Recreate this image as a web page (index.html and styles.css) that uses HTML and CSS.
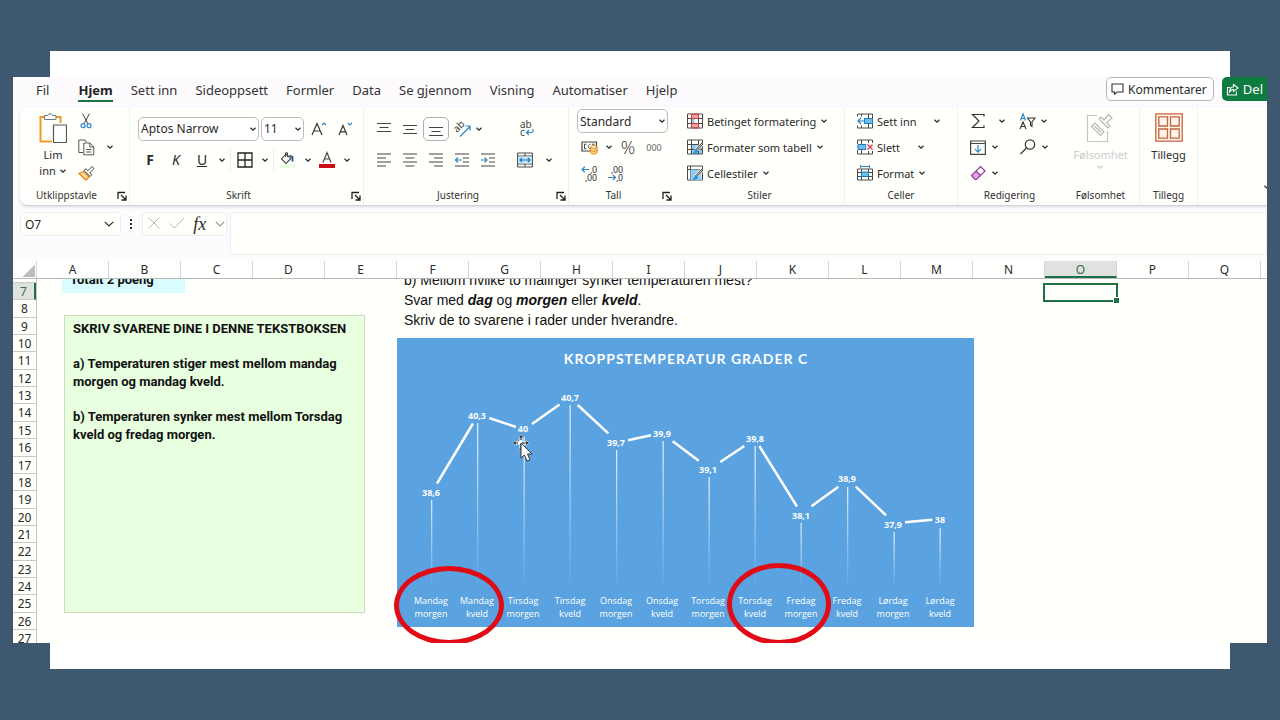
FILE: index.html
```html
<!DOCTYPE html>
<html lang="nb">

<head>
  <meta charset="UTF-8">
  <meta name="viewport" content="width=device-width, initial-scale=1.0">
  <title>Kroppstemperatur</title>
  <link rel="stylesheet" href="styles.css">
</head>

<body>
  <svg class="symbols" width="0" height="0" aria-hidden="true">
    <symbol id="chev" viewBox="0 0 8 8"><path d="M1.5 2.8L4 5.2 6.5 2.8" fill="none" stroke="currentColor" stroke-width="1.3"/></symbol>
    <symbol id="chev-big" viewBox="0 0 10 10"><path d="M.8 2.8L5 7 9.2 2.8" fill="none" stroke="currentColor" stroke-width="1.2"/></symbol>
    <symbol id="launcher" viewBox="0 0 10 10"><path d="M1 8V1.5H8M4 4l4.5 4.5M9 4.5V9H4.5" fill="none" stroke="#222" stroke-width="1.3"/></symbol>
    <symbol id="grid" viewBox="0 0 16 16"><path d="M.5 1h15v14H.5zM.5 5.5h15M.5 10.5h15M4.5 1v14M11.5 1v14" fill="none" stroke="#4a4a4a"/></symbol>
    <symbol id="brush" viewBox="0 0 16 16"><path d="M15.5 4.5L9 11.5" stroke="#fff" stroke-width="4"/><path d="M15.5 4.5L9 11.5" stroke="#444" stroke-width="2.4"/><path d="M15 5L9.5 11" stroke="#fff" stroke-width=".8"/><path d="M9.5 10.5c-2 0-2 3-4 4 2.500.8 5 0 5.500-2.500z" fill="#2b8fd0"/></symbol>
  </svg>

  <main class="slide">
    <div class="app">
      <header class="menu">
        <nav class="tabs">
          <a class="tab" href="#">Fil</a>
          <a class="tab active" href="#">Hjem</a>
          <a class="tab" href="#">Sett inn</a>
          <a class="tab" href="#">Sideoppsett</a>
          <a class="tab" href="#">Formler</a>
          <a class="tab" href="#">Data</a>
          <a class="tab" href="#">Se gjennom</a>
          <a class="tab" href="#">Visning</a>
          <a class="tab" href="#">Automatiser</a>
          <a class="tab" href="#">Hjelp</a>
        </nav>
        <button class="comments">
          <svg width="13" height="12" viewBox="0 0 13 12"><path d="M1 1h11v8H6L3.5 11.3V9H1z" fill="none" stroke="#333" stroke-width="1.1"/></svg>
          Kommentarer
        </button>
        <button class="share">
          <svg width="13" height="13" viewBox="0 0 13 13"><path d="M4 4.500H1.500V12h9V8.500M7.500 1.500L12 5 7.500 8.500V6.500C5 6.500 4 8 3.500 9.500 3.500 6 5 3.800 7.500 3.700z" fill="none" stroke="#fff" stroke-width="1.1"/></svg>
          Del
        </button>
      </header>

      <section class="ribbon">
        <div class="group clipboard">
          <div class="group-body">
            <button class="big-btn">
              <svg width="28" height="32" viewBox="0 0 28 32"><path d="M5 5H1.500v24.500H13M17 5h4.500v6" fill="none" stroke="#eb9b26" stroke-width="2"/><path d="M5.500 7.500v-4h3.200a2.600 2.600 0 0 1 5 0H17v4z" fill="#fff" stroke="#777"/><path d="M14.500 13h13v17.500h-13z" fill="#fff" stroke="#555" stroke-width="1.2"/></svg>
              <span>Lim</span>
              <span>inn <svg class="chev"><use href="#chev"/></svg></span>
            </button>
            <div class="rows">
              <div class="row"><button class="ic" aria-label="Klipp ut"><svg width="12" height="16" viewBox="0 0 12 16"><path d="M2.500.5L8 11M9.500.5L4 11" stroke="#444" fill="none"/><circle cx="3" cy="12.700" r="2" fill="none" stroke="#2b88c8" stroke-width="1.2"/><circle cx="9" cy="12.700" r="2" fill="none" stroke="#2b88c8" stroke-width="1.2"/></svg></button></div>
              <div class="row"><button class="ic" aria-label="Kopier"><svg width="17" height="17" viewBox="0 0 17 17"><path d="M5 13.500H.8V1H7l1.500 2" fill="none" stroke="#555"/><path d="M5.800 4h6l4 4v7.800h-10zM11.800 4v4h4M8 10.500h5.500M8 13h5.500" fill="none" stroke="#555"/></svg></button><button class="drop" aria-label="Kopier flere"><svg class="chev"><use href="#chev"/></svg></button></div>
              <div class="row"><button class="ic" aria-label="Kopier format"><svg width="17" height="16" viewBox="0 0 17 16"><path d="M1 8.500l5-2 5 5.500-3 3z" fill="#ffdc9a" stroke="#e08a10" stroke-width="1.3"/><path d="M6 5.500l6 6 1.800-1.800-2-2L16 3.500 14 1.500 9.800 5.700 7.800 3.800z" fill="#fff" stroke="#444"/></svg></button></div>
            </div>
          </div>
          <div class="group-foot"><span>Utklippstavle</span><button class="launch" aria-label="Utklippstavle"><svg><use href="#launcher"/></svg></button></div>
        </div>

        <div class="group font">
          <div class="group-body two">
            <div class="row">
              <div class="combo family"><select aria-label="Skrift"><option>Aptos Narrow</option></select><svg class="chev"><use href="#chev"/></svg></div>
              <div class="combo size"><select aria-label="Skriftstørrelse"><option>11</option></select><svg class="chev"><use href="#chev"/></svg></div>
              <button class="ic" aria-label="Øk skriftstørrelse"><svg width="16" height="16" viewBox="0 0 16 16"><path d="M1 14L6 2.500 11 14M2.800 10h6.400" fill="none" stroke="#333" stroke-width="1.2"/><path d="M11 4l2-2 2 2" fill="none" stroke="#2b88c8" stroke-width="1.2"/></svg></button>
              <button class="ic" aria-label="Reduser skriftstørrelse"><svg width="16" height="16" viewBox="0 0 16 16"><path d="M2 14L6 4.500 10 14M3.500 10.800h5" fill="none" stroke="#333" stroke-width="1.2"/><path d="M11 2l2 2 2-2" fill="none" stroke="#2b88c8" stroke-width="1.2"/></svg></button>
            </div>
            <div class="row">
              <button class="ic bold">F</button>
              <button class="ic italic">K</button>
              <button class="ic under">U</button>
              <button class="drop" aria-label="Understreking"><svg class="chev"><use href="#chev"/></svg></button>
              <i class="sep"></i>
              <button class="ic" aria-label="Kantlinjer"><svg width="16" height="16" viewBox="0 0 16 16"><path d="M1 1h14v14H1zM8 1v14M1 8h14" fill="none" stroke="#222" stroke-width="1.3"/></svg></button>
              <button class="drop" aria-label="Flere kantlinjer"><svg class="chev"><use href="#chev"/></svg></button>
              <i class="sep"></i>
              <button class="ic" aria-label="Fyllfarge"><svg width="16" height="16" viewBox="0 0 16 16"><path d="M6 2L1.500 7l4.500 4.500L11 6.500z" fill="#fff" stroke="#444" stroke-width="1.1"/><path d="M5.500 5V.8h2V5" fill="none" stroke="#444"/><path d="M9.500 3.500l3 1.500v4.500" fill="none" stroke="#24538a" stroke-width="1.8"/><path d="M0 13h15v3H0z" fill="#e8ffe0"/></svg></button>
              <button class="drop" aria-label="Flere fyllfarger"><svg class="chev"><use href="#chev"/></svg></button>
              <button class="ic" aria-label="Skriftfarge"><svg width="16" height="17" viewBox="0 0 16 17"><path d="M4 11.500L8 1.500l4 10M5.500 8h5" fill="none" stroke="#444" stroke-width="1.2"/><path d="M0 13h16v4H0z" fill="#d00c14"/></svg></button>
              <button class="drop" aria-label="Flere skriftfarger"><svg class="chev"><use href="#chev"/></svg></button>
            </div>
          </div>
          <div class="group-foot"><span>Skrift</span><button class="launch" aria-label="Skrift"><svg><use href="#launcher"/></svg></button></div>
        </div>

        <div class="group align">
          <div class="group-body two">
            <div class="row">
              <button class="ic" aria-label="Topp"><svg width="16" height="16" viewBox="0 0 16 16"><path d="M1 2.500h14M3.500 6.500h9M1 10.500h14" stroke="#444" stroke-width="1.2"/></svg></button>
              <button class="ic" aria-label="Midten"><svg width="16" height="16" viewBox="0 0 16 16"><path d="M1 4.500h14M3.500 8.500h9M1 12.500h14" stroke="#444" stroke-width="1.2"/></svg></button>
              <button class="ic pressed" aria-label="Bunn"><svg width="16" height="16" viewBox="0 0 16 16"><path d="M1 6.500h14M3.500 10.500h9M1 14.500h14" stroke="#444" stroke-width="1.2"/></svg></button>
              <button class="ic" aria-label="Retning"><svg width="18" height="18" viewBox="0 0 18 18"><text x="0" y="0" font-size="10" transform="translate(4 13) rotate(-45)" fill="#444">ab</text><path d="M7 16.500L17 6.500M12.500 6H17v4.500" fill="none" stroke="#2b88c8" stroke-width="1.2"/></svg></button>
              <button class="drop" aria-label="Flere retninger"><svg class="chev"><use href="#chev"/></svg></button>
              <button class="ic wrap" aria-label="Bryt tekst"><svg width="15" height="17" viewBox="0 0 15 17"><text x="1" y="8" font-size="10" fill="#444">ab</text><text x="1" y="16" font-size="10" fill="#444">c</text><path d="M14 9v2c0 1-.5 1.500-1.500 1.500H7.500M10 10l-2.500 2.500L10 15" fill="none" stroke="#2b88c8" stroke-width="1.2"/></svg></button>
            </div>
            <div class="row">
              <button class="ic" aria-label="Venstrejuster"><svg width="16" height="16" viewBox="0 0 16 16"><path d="M1 2h14M1 6h9M1 10h14M1 14h9" stroke="#444" stroke-width="1.2"/></svg></button>
              <button class="ic" aria-label="Midtstill"><svg width="16" height="16" viewBox="0 0 16 16"><path d="M1 2h14M3.500 6h9M1 10h14M3.500 14h9" stroke="#444" stroke-width="1.2"/></svg></button>
              <button class="ic" aria-label="Høyrejuster"><svg width="16" height="16" viewBox="0 0 16 16"><path d="M1 2h14M6 6h9M1 10h14M6 14h9" stroke="#444" stroke-width="1.2"/></svg></button>
              <button class="ic" aria-label="Reduser innrykk"><svg width="16" height="16" viewBox="0 0 16 16"><path d="M1 2h14M9 6h6M9 10h6M1 14h14" stroke="#444" stroke-width="1.2"/><path d="M7.500 8H1.500M4 5.500L1.500 8 4 10.500" fill="none" stroke="#2b88c8" stroke-width="1.2"/></svg></button>
              <button class="ic" aria-label="Øk innrykk"><svg width="16" height="16" viewBox="0 0 16 16"><path d="M1 2h14M9 6h6M9 10h6M1 14h14" stroke="#444" stroke-width="1.2"/><path d="M1 8h6M4.500 5.500L7 8l-2.500 2.500" fill="none" stroke="#2b88c8" stroke-width="1.2"/></svg></button>
              <button class="ic merge" aria-label="Slå sammen"><svg width="16" height="16" viewBox="0 0 16 16"><path d="M.6 1h14.800v14H.6zM.6 4h14.800M.6 12h14.800M8 1v3M8 12v3" fill="none" stroke="#444"/><path d="M1 4.500h14v7H1z" fill="#bfe5f8"/><path d="M3 8h10M5 6L3 8l2 2M11 6l2 2-2 2" fill="none" stroke="#1c78b8" stroke-width="1.1"/></svg></button>
              <button class="drop far" aria-label="Flere"><svg class="chev"><use href="#chev"/></svg></button>
            </div>
          </div>
          <div class="group-foot"><span>Justering</span><button class="launch" aria-label="Justering"><svg><use href="#launcher"/></svg></button></div>
        </div>

        <div class="group number">
          <div class="group-body three">
            <div class="row"><div class="combo format"><select aria-label="Tallformat"><option>Standard</option></select><svg class="chev"><use href="#chev"/></svg></div></div>
            <div class="row">
              <button class="ic" aria-label="Valuta"><svg width="17" height="15" viewBox="0 0 17 15"><path d="M1 2h14.500v9H1z" fill="none" stroke="#444" stroke-width="1.2"/><path d="M5.500 4.200H3.500v4.500h2M9.500 4.200c-3 0-3 4.500 0 4.500M11 4.200h2.500" fill="none" stroke="#444"/><path d="M9.500 7v5.500c0 2 6.500 2 6.500 0V7z" fill="#ffd68c" stroke="#e08a10"/><ellipse cx="12.800" cy="7" rx="3.200" ry="1.400" fill="#fff" stroke="#e08a10"/><path d="M9.500 9.800c0 1.800 6.500 1.800 6.500 0" fill="none" stroke="#e08a10"/></svg></button>
              <button class="drop" aria-label="Flere valutaer"><svg class="chev"><use href="#chev"/></svg></button>
              <button class="ic percent">%</button>
              <button class="ic thousand">000</button>
            </div>
            <div class="row">
              <button class="ic decimals" aria-label="Flere desimaler"><svg width="17" height="17" viewBox="0 0 17 17"><path d="M8 4.500H1M3.800 1.800L1 4.500l2.800 2.700" fill="none" stroke="#2b88c8" stroke-width="1.2"/><text x="16" y="8">,0</text><text x="16" y="16">,00</text></svg></button>
              <button class="ic decimals" aria-label="Færre desimaler"><svg width="17" height="17" viewBox="0 0 17 17"><path d="M1 12.500h7.500M5.800 9.800l2.700 2.700-2.700 2.700" fill="none" stroke="#2b88c8" stroke-width="1.2"/><text x="16" y="8">,00</text><text x="16" y="16">,0</text></svg></button>
            </div>
          </div>
          <div class="group-foot"><span>Tall</span><button class="launch" aria-label="Tall"><svg><use href="#launcher"/></svg></button></div>
        </div>

        <div class="group styles">
          <div class="group-body three">
            <div class="row"><button class="txt"><svg width="16" height="16" viewBox="0 0 16 16"><path d="M4.500 1h7v4.500h-7zM4.500 10.500h7V15h-7z" fill="#f4a09a"/><path d="M4.500 5.500h3v5h-3z" fill="#8fc9f0"/><use href="#grid"/><path d="M4.500 1h7v4.500h-7zM4.500 10.500h7V15h-7z" fill="none" stroke="#cf3f3a"/></svg>Betinget formatering<svg class="chev"><use href="#chev"/></svg></button></div>
            <div class="row"><button class="txt"><svg width="16" height="16" viewBox="0 0 16 16"><path d="M4.500 5.500h11V15h-11z" fill="#8fcdf2"/><use href="#grid"/><use href="#brush"/></svg>Formater som tabell<svg class="chev"><use href="#chev"/></svg></button></div>
            <div class="row"><button class="txt"><svg width="16" height="16" viewBox="0 0 16 16"><path d="M.5 1h15v14H.5zM.5 4.500h15M3.500 1v14" fill="none" stroke="#4a4a4a"/><path d="M3.500 4.500h11V15h-11z" fill="#8fcdf2"/><use href="#brush"/></svg>Cellestiler<svg class="chev"><use href="#chev"/></svg></button></div>
          </div>
          <div class="group-foot"><span>Stiler</span></div>
        </div>

        <div class="group cells">
          <div class="group-body three">
            <div class="row"><button class="txt"><svg width="16" height="16" viewBox="0 0 16 16"><use href="#grid"/><path d="M0 3.500h8v9H0z" fill="#fff"/><path d="M7.500 5.500h8v5h-8z" fill="#6cc0f0" stroke="#1c78b8"/><path d="M7.500 8H1M4 5L1 8l3 3" fill="none" stroke="#2b88c8" stroke-width="1.2"/></svg>Sett inn</button><button class="drop gap-l" aria-label="Sett inn flere"><svg class="chev"><use href="#chev"/></svg></button></div>
            <div class="row"><button class="txt"><svg width="16" height="16" viewBox="0 0 16 16"><use href="#grid"/><path d="M0 5h16v6H0z" fill="#fff"/><path d="M1 5.500h8v5H1z" fill="#6cc0f0" stroke="#1c78b8"/><path d="M9.500 4H16v8H9.500z" fill="#fff"/><path d="M10.500 5.500l5 5M15.500 5.500l-5 5" stroke="#d23a3a" stroke-width="1.3"/></svg>Slett</button><button class="drop gap-l" aria-label="Slett flere"><svg class="chev"><use href="#chev"/></svg></button></div>
            <div class="row"><button class="txt"><svg width="16" height="16" viewBox="0 0 16 16"><path d="M.5 4h15v11H.5zM.5 7.500h15M.5 11.500h15M4.500 4v11M11.500 4v11" fill="none" stroke="#4a4a4a"/><path d="M4.500 7h7v4.500h-7z" fill="#6cc0f0" stroke="#1c78b8"/><path d="M3.500 1.500h9M3.500 0v3M12.500 0v3" stroke="#2b88c8"/></svg>Format<svg class="chev"><use href="#chev"/></svg></button></div>
          </div>
          <div class="group-foot"><span>Celler</span></div>
        </div>

        <div class="group edit">
          <div class="group-body three">
            <div class="row"><button class="ic" aria-label="Summer"><svg width="14" height="16" viewBox="0 0 14 16"><path d="M13 3.500V1.500H1.500L8 8l-6.500 6.500H13v-2" fill="none" stroke="#333" stroke-width="1.2"/></svg></button><button class="drop gap-s" aria-label="Flere funksjoner"><svg class="chev"><use href="#chev"/></svg></button>
              <button class="ic sort" aria-label="Sorter og filtrer"><svg width="17" height="17" viewBox="0 0 17 17"><path d="M1.500 7.500L4 1l2.500 6.500M2.400 5.500h3.200" fill="none" stroke="#2b88c8" stroke-width="1.2"/><path d="M1 16l3-7 3 7M2.200 13.500h3.600M8.500 5H16l-3 4v4.500l-1.500-1V9z" fill="none" stroke="#333" stroke-width="1.1"/></svg></button><button class="drop" aria-label="Flere sorteringer"><svg class="chev"><use href="#chev"/></svg></button></div>
            <div class="row"><button class="ic" aria-label="Fyll"><svg width="16" height="15" viewBox="0 0 16 15"><path d="M.6 1h14.800v13.400H.6zM.6 3.500h14.800" fill="none" stroke="#444" stroke-width="1.2"/><path d="M8 5v7M5 9.200l3 3 3-3" fill="none" stroke="#2b88c8" stroke-width="1.2"/></svg></button><button class="drop" aria-label="Fyll flere"><svg class="chev"><use href="#chev"/></svg></button>
              <button class="ic find" aria-label="Søk etter"><svg width="16" height="16" viewBox="0 0 16 16"><circle cx="10" cy="5.500" r="4.700" fill="none" stroke="#333" stroke-width="1.2"/><path d="M6.500 9L.5 15" stroke="#333" stroke-width="1.2"/></svg></button><button class="drop" aria-label="Flere søk"><svg class="chev"><use href="#chev"/></svg></button></div>
            <div class="row"><button class="ic" aria-label="Fjern"><svg width="16" height="16" viewBox="0 0 16 16"><path d="M1.500 10.500L6 6l4.500 4.500-4 4H5z" fill="#e8a0e8"/><path d="M10.500 1.500L15 6l-8.500 8.500H5l-3.500-4zM6 6l4.500 4.500" fill="none" stroke="#8b3a9b" stroke-width="1.2"/></svg></button><button class="drop" aria-label="Fjern flere"><svg class="chev"><use href="#chev"/></svg></button></div>
          </div>
          <div class="group-foot"><span>Redigering</span></div>
        </div>

        <div class="group sens">
          <div class="group-body">
            <button class="big-btn" disabled>
              <svg width="28" height="32" viewBox="0 0 28 32"><path d="M11 3.500H1.500v26h20V19" fill="none" stroke="#c4c4c4" stroke-width="1.2"/><path d="M5.500 14.500l3.500-3.500 9 9-3.500 3.500zM8.500 14l6.500 6.500" fill="none" stroke="#b8b8b8" stroke-width="1.2"/><path d="M13 7l9 9 2-2-3.500-3.500 5.500-4.500-3.500-3.500-4.500 5.500L15 5z" fill="#fff" stroke="#b8b8b8" stroke-width="1.2"/></svg>
              <span>Følsomhet</span>
              <svg class="chev"><use href="#chev"/></svg>
            </button>
          </div>
          <div class="group-foot"><span>Følsomhet</span></div>
        </div>

        <div class="group addins">
          <div class="group-body">
            <button class="big-btn">
              <svg width="28" height="32" viewBox="0 0 28 32"><path d="M.8 1.800h26.400v27.400H.8zM3.800 4.800h8.700v9.200H3.800zM15.500 4.800h8.700v9.200h-8.700zM3.800 17h8.700v9.200H3.800zM15.500 17h8.700v9.200h-8.700z" fill="#fff6ee" stroke="#c8623a" stroke-width="1.3"/></svg>
              <span>Tillegg</span>
            </button>
          </div>
          <div class="group-foot"><span>Tillegg</span></div>
        </div>
        <button class="collapse" aria-label="Skjul båndet"><svg class="chev"><use href="#chev"/></svg></button>
      </section>

      <div class="formula-bar">
        <div class="name-box"><input type="text" value="O7" aria-label="Navneboks"><svg width="10" height="10"><use href="#chev-big"/></svg></div>
        <svg class="dots" width="4" height="12" viewBox="0 0 4 12"><path d="M1 1h2v2H1zM1 5h2v2H1zM1 9h2v2H1z" fill="#333"/></svg>
        <div class="fx-box">
          <button aria-label="Avbryt"><svg width="12" height="12" viewBox="0 0 12 12"><path d="M.5.5l11 11M11.500.5l-11 11" stroke="#b5b5b5"/></svg></button>
          <button aria-label="Skriv inn"><svg width="16" height="12" viewBox="0 0 16 12"><path d="M1 6.500l4.500 4.500L15 1" fill="none" stroke="#b5b5b5"/></svg></button>
          <button class="fx">fx</button>
          <button class="pale" aria-label="Funksjoner"><svg width="10" height="10"><use href="#chev-big"/></svg></button>
        </div>
        <input class="formula" type="text" aria-label="Formellinje">
      </div>

      <div class="col-heads">
        <div class="corner"></div>
        <div>A</div><div>B</div><div>C</div><div>D</div><div>E</div><div>F</div><div>G</div><div>H</div><div>I</div><div>J</div><div>K</div><div>L</div><div>M</div><div>N</div><div class="on">O</div><div>P</div><div>Q</div>
      </div>

      <div class="sheet">
        <div class="row-heads">
          <div></div><div class="on">7</div><div>8</div><div>9</div><div>10</div><div>11</div><div>12</div><div>13</div><div>14</div><div>15</div><div>16</div><div>17</div><div>18</div><div>19</div><div>20</div><div>21</div><div>22</div><div>23</div><div>24</div><div>25</div><div>26</div><div>27</div>
        </div>
        <div class="canvas">
          <div class="points">Totalt 2 poeng</div>

          <div class="answer">
            <p>SKRIV SVARENE DINE I DENNE TEKSTBOKSEN</p>
            <p>a) Temperaturen stiger mest mellom mandag morgen og mandag kveld.</p>
            <p>b) Temperaturen synker mest mellom Torsdag kveld og fredag morgen.</p>
          </div>

          <div class="question">
            b) Mellom hvilke to målinger synker temperaturen mest?<br>
            Svar med <b>dag</b> og <b>morgen</b> eller <b>kveld</b>.<br>
            Skriv de to svarene i rader under hverandre.
          </div>

          <svg class="chart" width="577" height="289" viewBox="397 338 577 289">
            <defs>
              <linearGradient id="fade" x1="0" y1="0" x2="0" y2="1">
                <stop offset="0" stop-color="#fff" stop-opacity=".8"/>
                <stop offset="1" stop-color="#fff" stop-opacity=".05"/>
              </linearGradient>
            </defs>
            <text class="title" x="686" y="364">KROPPSTEMPERATUR GRADER C</text>
            <g fill="url(#fade)">
              <rect x="431" y="500" width="1.3" height="84"/>
              <rect x="477" y="423" width="1.3" height="161"/>
              <rect x="523.5" y="437" width="1.3" height="147"/>
              <rect x="569.5" y="405" width="1.3" height="179"/>
              <rect x="616" y="450" width="1.3" height="134"/>
              <rect x="662.5" y="441" width="1.3" height="143"/>
              <rect x="708.5" y="477" width="1.3" height="107"/>
              <rect x="754.5" y="446" width="1.3" height="138"/>
              <rect x="800.5" y="523" width="1.3" height="61"/>
              <rect x="847" y="487" width="1.3" height="97"/>
              <rect x="893.5" y="532" width="1.3" height="52"/>
              <rect x="939.5" y="528" width="1.3" height="56"/>
            </g>
            <path class="line" d="M437 483.500L473 423.500M489.300 418L516 427M532 424l27.500-19.500M577.700 405l30.600 28.300M628 440.300l23-5M672.700 441.300l26 19.400M720.300 462l24-16M759.300 446L797 506.500M811.400 506.300l27-19.600M855.800 486.700l30.200 28.600M905 522.300l27.300-2.600"/>
            <g class="values">
              <text x="431" y="496">38,6</text>
              <text x="477" y="419">40,3</text>
              <text x="523" y="432">40</text>
              <text x="570" y="401">40,7</text>
              <text x="616" y="446">39,7</text>
              <text x="662" y="437">39,9</text>
              <text x="708" y="473">39,1</text>
              <text x="755" y="442">39,8</text>
              <text x="801" y="519">38,1</text>
              <text x="847" y="482">38,9</text>
              <text x="893" y="528">37,9</text>
              <text x="940" y="523">38</text>
            </g>
            <g class="days">
              <text x="431" y="604">Mandag</text><text x="431" y="617">morgen</text>
              <text x="477" y="604">Mandag</text><text x="477" y="617">kveld</text>
              <text x="523" y="604">Tirsdag</text><text x="523" y="617">morgen</text>
              <text x="570" y="604">Tirsdag</text><text x="570" y="617">kveld</text>
              <text x="616" y="604">Onsdag</text><text x="616" y="617">morgen</text>
              <text x="662" y="604">Onsdag</text><text x="662" y="617">kveld</text>
              <text x="708" y="604">Torsdag</text><text x="708" y="617">morgen</text>
              <text x="755" y="604">Torsdag</text><text x="755" y="617">kveld</text>
              <text x="801" y="604">Fredag</text><text x="801" y="617">morgen</text>
              <text x="847" y="604">Fredag</text><text x="847" y="617">kveld</text>
              <text x="893" y="604">Lørdag</text><text x="893" y="617">morgen</text>
              <text x="940" y="604">Lørdag</text><text x="940" y="617">kveld</text>
            </g>
          </svg>

          <div class="ring ring-mon"></div>
          <div class="ring ring-thu"></div>
          <div class="selected"></div>

          <svg class="cursor" width="22" height="28" viewBox="0 0 22 28">
            <path d="M9 2v14M2 9h14" stroke="#fff" stroke-width="3"/>
            <path d="M9 1v15M1 9h15" stroke="#111" stroke-width="1.2" stroke-dasharray="5 4"/>
            <path d="M6.500 4L9 1l2.500 3zM6.500 14L9 17l2.500-3zM4 6.500L1 9l3 2.500zM14 6.500L17 9l-3 2.500z" fill="#111" stroke="#fff" stroke-width=".5"/>
            <path d="M9 9v15l3.500-3 2.500 6 3-1.200-2.500-5.800h4.500z" fill="#fff" stroke="#333"/>
          </svg>
        </div>
      </div>
    </div>
  </main>
</body>

</html>
```

FILE: styles.css
```css
* {
  margin: 0;
  padding: 0;
  box-sizing: border-box;
}

body {
  min-height: 100vh;
  padding: 51px 50px;
  background: #3e5870;
  font-family: "Noto Sans", "Open Sans", sans-serif;
  font-size: 12px;
  color: #2b2b2b;
  overflow-x: hidden;
}

button,
input,
select {
  font: inherit;
  color: inherit;
  border: 0;
  background: none;
}

.symbols {
  position: absolute;
}

.slide {
  padding: 26px 0;
  background: #fff;
}

/* the workbook is wider than the slide behind it */
.app {
  margin: 0 -37px;
  background: #fdfbfe;
  overflow: hidden;
}

/* tabs */
.menu {
  display: flex;
  height: 30px;
  padding-left: 23px;
}

.tabs {
  display: flex;
  flex: 1;
  gap: 18px;
}

.tab {
  height: 25px;
  line-height: 27px;
  font-size: 13px;
  color: #333;
  text-decoration: none;
  white-space: nowrap;
}

.tab.active {
  margin-left: 11px;
  font-weight: bold;
  color: #222;
  border-bottom: 2px solid #1e7145;
}

.comments,
.share {
  display: flex;
  align-items: center;
  height: 24px;
  white-space: nowrap;
}

.comments {
  gap: 4px;
  padding: 0 6px 0 4px;
  margin-right: 8px;
  font-size: 12px;
  background: #fff;
  border: 1px solid #b5b5b8;
  border-radius: 5px;
}

.share {
  gap: 4px;
  padding: 0 4px;
  font-size: 13px;
  color: #fff;
  background: #0f7c3f;
  border-radius: 5px 0 0 5px;
}

/* ribbon */
.ribbon {
  display: flex;
  margin-left: 7px;
  padding-top: 1px;
  background: #fffffc;
  border-bottom: 1px solid #d5d2d6;
  border-radius: 8px 0 0 8px;
  box-shadow: 0 1px 3px #ddd8e0;
}

.group {
  display: flex;
  flex-direction: column;
  flex: none;
  height: 97px;
  border-right: 1px solid #f0f0ee;
}

.clipboard { width: 110px; }
.font { width: 234px; }
.align { width: 205px; }
.number { width: 106px; }
.styles { width: 170px; }
.cells { width: 113px; }
.edit { width: 104px; }
.sens { width: 78px; }
.addins { width: 58px; }

.number,
.edit {
  border-color: transparent;
}

.group-body {
  display: flex;
  justify-content: center;
  height: 78px;
}

.group-body.two,
.group-body.three {
  flex-direction: column;
  justify-content: flex-start;
  padding-left: 7px;
}

.group-body.two {
  padding-top: 5px;
}

.row {
  display: flex;
  align-items: center;
  height: 26px;
}

.two .row {
  height: 31px;
}

.group-foot {
  display: flex;
  align-items: center;
  height: 17px;
  font-size: 10px;
  color: #333;
}

.group-foot span {
  flex: 1;
  text-align: center;
}

.launch {
  width: 16px;
  height: 12px;
}

.launch svg {
  display: block;
  width: 10px;
  height: 10px;
  margin: 2px 0 0 4px;
}

.ic {
  display: flex;
  align-items: center;
  justify-content: center;
  width: 26px;
  height: 24px;
}

.ic svg {
  overflow: visible;
}

.ic.pressed {
  background: #fdfdfd;
  border: 1px solid #b0b0b0;
  border-radius: 5px;
}

.chev {
  flex: none;
  width: 8px;
  height: 8px;
}

.drop {
  display: flex;
  align-items: center;
  justify-content: center;
  width: 13px;
  height: 24px;
}

.sep {
  width: 1px;
  height: 22px;
  margin: 0 1px 0 2px;
  background: #eee;
}

.bold {
  font-size: 14px;
  font-weight: bold;
}

.italic {
  font-size: 14px;
  font-style: italic;
}

.under {
  font-size: 14px;
  text-decoration: underline;
}

.percent {
  font: 300 18px "Open Sans", sans-serif;
}

.thousand {
  font-size: 9px;
  color: #666;
}

.decimals text {
  font-family: Roboto, sans-serif;
  font-size: 9px;
  text-anchor: end;
  fill: #333;
}

.align .drop { margin-left: -3px; }
.align .wrap { margin-left: 28px; }
.align .merge { margin-left: 11px; }
.align .far { margin-left: 4px; }

.big-btn {
  display: flex;
  flex-direction: column;
  align-items: center;
  padding-top: 4px;
  font-size: 11px;
  line-height: 16px;
}

.big-btn > svg:first-child {
  margin-bottom: 3px;
}

.big-btn:disabled {
  color: #ccc;
}

.clipboard .group-body {
  justify-content: flex-start;
  padding-left: 19px;
}

.clipboard .rows {
  margin-left: 6px;
}

.clipboard .drop {
  margin-left: 4px;
}

.combo {
  display: flex;
  align-items: center;
  height: 24px;
  padding-right: 1px;
  background: #fff;
  border: 1px solid #bcbcbc;
  border-radius: 5px;
}

.combo select {
  flex: 1;
  min-width: 0;
  padding-left: 2px;
  font-size: 12px;
  appearance: none;
}

.family {
  width: 121px;
  margin: 0 2px 0 1px;
}

.size {
  width: 43px;
  margin-right: 2px;
}

.format {
  width: 91px;
  margin-left: 1px;
}

.txt {
  display: flex;
  align-items: center;
  gap: 4px;
  padding-left: 5px;
  font-size: 11px;
  white-space: nowrap;
}

.gap-l { margin-left: 14px; }
.edit .drop { margin-left: -3px; }
.edit .gap-s { margin-left: 4px; }
.sort { margin-left: 6px; }
.find { margin-left: 14px; }

.collapse {
  align-self: flex-end;
  margin: 0 -4px 10px auto;
}

/* formula bar */
.formula-bar {
  display: flex;
  align-items: flex-start;
  padding: 6px 0 6px 7px;
}

.name-box {
  display: flex;
  align-items: center;
  width: 101px;
  height: 24px;
  padding: 0 6px 0 4px;
  background: #fffffc;
  border: 1px solid #efedf0;
  border-radius: 4px;
}

.name-box input {
  flex: 1;
  min-width: 0;
}

.dots {
  margin: 6px 9px 0 8px;
}

.fx-box {
  display: flex;
  align-items: center;
  justify-content: space-between;
  width: 85px;
  height: 24px;
  padding: 0 1px 0 5px;
  background: #fffffc;
  border: 1px solid #efedf0;
  border-radius: 4px;
}

.fx-box .fx {
  font-family: "Liberation Serif", serif;
  font-size: 18px;
  font-style: italic;
  line-height: 22px;
}

.fx-box .pale {
  color: #999;
}

.formula {
  flex: 1;
  height: 43px;
  margin-left: 3px;
  padding: 0 6px;
  background: #fffffc;
  border: 1px solid #efedf0;
  border-radius: 5px 0 0 5px;
}

/* sheet */
.col-heads {
  display: flex;
  height: 18px;
  background: #fffffd;
  border-bottom: 1px solid #b9b9b9;
}

.col-heads div {
  flex: none;
  width: 72px;
  line-height: 18px;
  text-align: center;
  border-right: 1px solid #d6d6d6;
}

.col-heads .corner {
  width: 24px;
  background: linear-gradient(135deg, transparent 50%, #bdbdbd 50%) 9px 3px / 13px 13px no-repeat;
}

.col-heads .on {
  color: #3c6b52;
  background: #e0e2df;
  border-bottom: 2px solid #1e7145;
}

.sheet {
  display: flex;
  height: 364px;
  background: #fffffc;
}

.row-heads {
  display: grid;
  grid-template-rows: 4px repeat(20, 1fr) 13px;
  width: 24px;
  border-right: 1px solid #c4c4c4;
}

.row-heads div {
  line-height: 18px;
  text-align: center;
  border-bottom: 1px solid #c8c8c8;
  overflow: hidden;
}

.row-heads div:last-child {
  border-bottom: 0;
}

.row-heads .on {
  color: #3c6b52;
  background: #e0e2df;
  border-right: 2px solid #1e7145;
}

.canvas {
  position: relative;
  flex: 1;
  color: #111;
  overflow: hidden;
}

/* drawing objects that float over the cells */
.canvas > * {
  position: absolute;
}

.points {
  left: 25px;
  top: -8px;
  width: 123px;
  height: 22px;
  padding-left: 8px;
  font: bold 13px/18px Roboto, sans-serif;
  background: #d9fcff;
}

.answer {
  left: 27px;
  top: 36px;
  width: 301px;
  height: 298px;
  padding: 4px 8px;
  font: bold 13px/18px Roboto, sans-serif;
  background: #e8ffe0;
  border: 1px solid #c6dcbc;
}

.answer p {
  margin-bottom: 17px;
}

.question {
  left: 367px;
  top: -9px;
  font: 14px/20px "Liberation Sans", Arial, sans-serif;
  white-space: nowrap;
}

.question b {
  font-style: italic;
}

.chart {
  left: 360px;
  top: 59px;
  background: #5aa2e0;
  font-family: "Open Sans", sans-serif;
}

.chart text {
  fill: #fff;
  text-anchor: middle;
}

.chart .title {
  font-family: Lato, sans-serif;
  font-size: 14px;
  font-weight: bold;
  letter-spacing: 1px;
}

.chart .values {
  font-size: 9px;
  font-weight: bold;
}

.chart .days {
  font-size: 9px;
}

.chart .line {
  fill: none;
  stroke: #fff;
  stroke-width: 2.5;
}

.ring {
  border: 5px solid #e00b14;
  border-radius: 50%;
}

.ring-mon {
  left: 357px;
  top: 287px;
  width: 110px;
  height: 79px;
}

.ring-thu {
  left: 690px;
  top: 284px;
  width: 104px;
  height: 82px;
}

.selected {
  left: 1006px;
  top: 4px;
  width: 75px;
  height: 19px;
  border: 2px solid #1e7145;
}

.selected::after {
  content: "";
  position: absolute;
  right: -3px;
  bottom: -3px;
  width: 5px;
  height: 5px;
  background: #1e7145;
  border: 1px solid #fff;
  border-width: 1px 0 0 1px;
}

.cursor {
  left: 475px;
  top: 155px;
}
```
